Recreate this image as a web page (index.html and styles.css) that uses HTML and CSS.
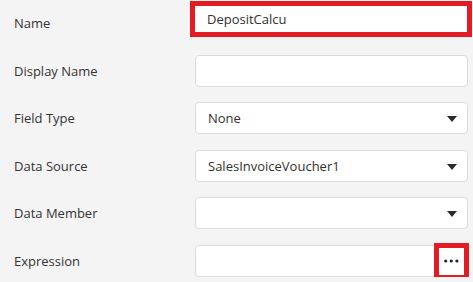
FILE: index.html
```html
<!DOCTYPE html>
<html lang="en">
<head>
    <meta charset="UTF-8">
    <title>Field Properties</title>
    <link rel="stylesheet" href="styles.css">
</head>
<body>
    <div class="props">
        <label class="label">Name</label>
        <div class="field field-highlight">DepositCalcu</div>

        <label class="label">Display Name</label>
        <div class="field"></div>

        <label class="label">Field Type</label>
        <div class="field select">None<span class="caret"></span></div>

        <label class="label">Data Source</label>
        <div class="field select">SalesInvoiceVoucher1<span class="caret"></span></div>

        <label class="label">Data Member</label>
        <div class="field select"><span class="caret"></span></div>

        <label class="label">Expression</label>
        <div class="field expr">
            <button class="more-btn" title="Edit expression">
                <svg width="15" height="4" viewBox="0 0 15 4">
                    <circle cx="1.7" cy="2" r="1.6" fill="#1c2340"/>
                    <circle cx="7.3" cy="2" r="1.6" fill="#1c2340"/>
                    <circle cx="12.9" cy="2" r="1.6" fill="#1c2340"/>
                </svg>
            </button>
        </div>
    </div>
</body>
</html>
```

FILE: styles.css
```css
body {
    margin: 0;
    background-color: #f4f4f4;
    font-family: "Open Sans", Arial, sans-serif;
    font-size: 13px;
    color: #333;
}
.props {
    display: grid;
    grid-template-columns: 195px 273px;
    grid-auto-rows: 32px;
    row-gap: 15.5px;
    padding-top: 7px;
    align-items: center;
}
.label {
    padding-left: 14px;
    color: #333;
}
.field {
    position: relative;
    box-sizing: border-box;
    height: 32px;
    display: flex;
    align-items: center;
    padding: 0 12px;
    background: #fff;
    border: 1px solid #dcdcdc;
    border-radius: 4px;
    color: #323130;
}
/* red annotation box round the name field */
.field-highlight {
    height: 36px;
    margin: -8px -4px 0 -5px;
    padding-left: 12px;
    border: 5px solid #e31b23;
    border-radius: 0;
}
.caret {
    position: absolute;
    right: 10px;
    top: 13px;
    width: 0;
    height: 0;
    border-left: 5px solid transparent;
    border-right: 5px solid transparent;
    border-top: 6px solid #2b2b2b;
}
.more-btn {
    position: absolute;
    right: -2px;
    top: -3px;
    box-sizing: border-box;
    width: 35px;
    height: 37px;
    padding: 0;
    display: flex;
    align-items: center;
    justify-content: center;
    background: #fff;
    border: 5px solid #e31b23;
    cursor: pointer;
}
```
